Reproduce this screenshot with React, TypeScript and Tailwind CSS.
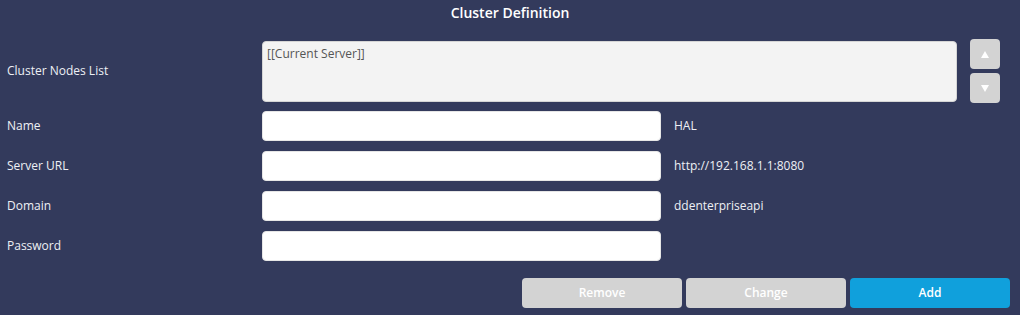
// Cluster definition form
const FONT = "font-['Open_Sans',_'Noto_Sans',_sans-serif]"

const FIELDS = [
  { label: 'Name', hint: 'HAL', type: 'text' },
  { label: 'Server URL', hint: 'http://192.168.1.1:8080', type: 'text' },
  { label: 'Domain', hint: 'ddenterpriseapi', type: 'text' },
  { label: 'Password', hint: '', type: 'password' },
]

function FieldRow({ label, hint, type }: { label: string; hint: string; type: string }) {
  return (
    <div className="flex items-center h-[30px] mt-[10px]">
      <label className="w-[262px] pl-[7px] text-[12px] text-[#eef0f5]">{label}</label>
      <input
        type={type}
        className="w-[399px] h-[30px] rounded-[4px] bg-white border border-[#e6e6e6] px-2 text-[12px] outline-none"
      />
      <span className="ml-[13px] text-[12px] text-[#eef0f5]">{hint}</span>
    </div>
  )
}

export default function App() {
  return (
    <div className={`${FONT} w-[1020px] h-[315px] bg-[#333a5c] overflow-hidden`}>
      <div className="h-[25px] flex items-center justify-center text-[14px] font-semibold text-white">
        Cluster Definition
      </div>

      {/* nodes list */}
      <div className="flex items-center mt-[14px]">
        <label className="w-[262px] pl-[7px] text-[12px] text-[#eef0f5]">Cluster Nodes List</label>
        <div className="w-[695px] h-[61px] rounded-[4px] bg-[#f3f3f3] border border-[#d5d5d5] px-[4px] py-[3px] text-[12px] text-[#555]">
          [[Current Server]]
        </div>
        <div className="ml-[13px] flex flex-col gap-[4px]">
          <button type="button" className="w-[30px] h-[30px] rounded-[4px] bg-[#d3d3d3] flex items-center justify-center">
            <svg width="8" height="7" viewBox="0 0 8 7"><path d="M4 0L8 7H0Z" fill="#fff" /></svg>
          </button>
          <button type="button" className="w-[30px] h-[30px] rounded-[4px] bg-[#d3d3d3] flex items-center justify-center">
            <svg width="8" height="7" viewBox="0 0 8 7"><path d="M0 0H8L4 7Z" fill="#fff" /></svg>
          </button>
        </div>
      </div>

      <div className="-mt-[2px]">
        {FIELDS.map(f => (
          <FieldRow key={f.label} {...f} />
        ))}
      </div>

      {/* actions */}
      <div className="flex justify-end gap-[4px] pr-[10px] mt-[17px]">
        <button type="button" className="w-[160px] h-[30px] rounded-[4px] bg-[#d3d3d3] text-white text-[12px] font-semibold">
          Remove
        </button>
        <button type="button" className="w-[160px] h-[30px] rounded-[4px] bg-[#d3d3d3] text-white text-[12px] font-semibold">
          Change
        </button>
        <button type="button" className="w-[160px] h-[30px] rounded-[4px] bg-[#10a0dc] text-white text-[12px] font-semibold">
          Add
        </button>
      </div>
    </div>
  )
}
